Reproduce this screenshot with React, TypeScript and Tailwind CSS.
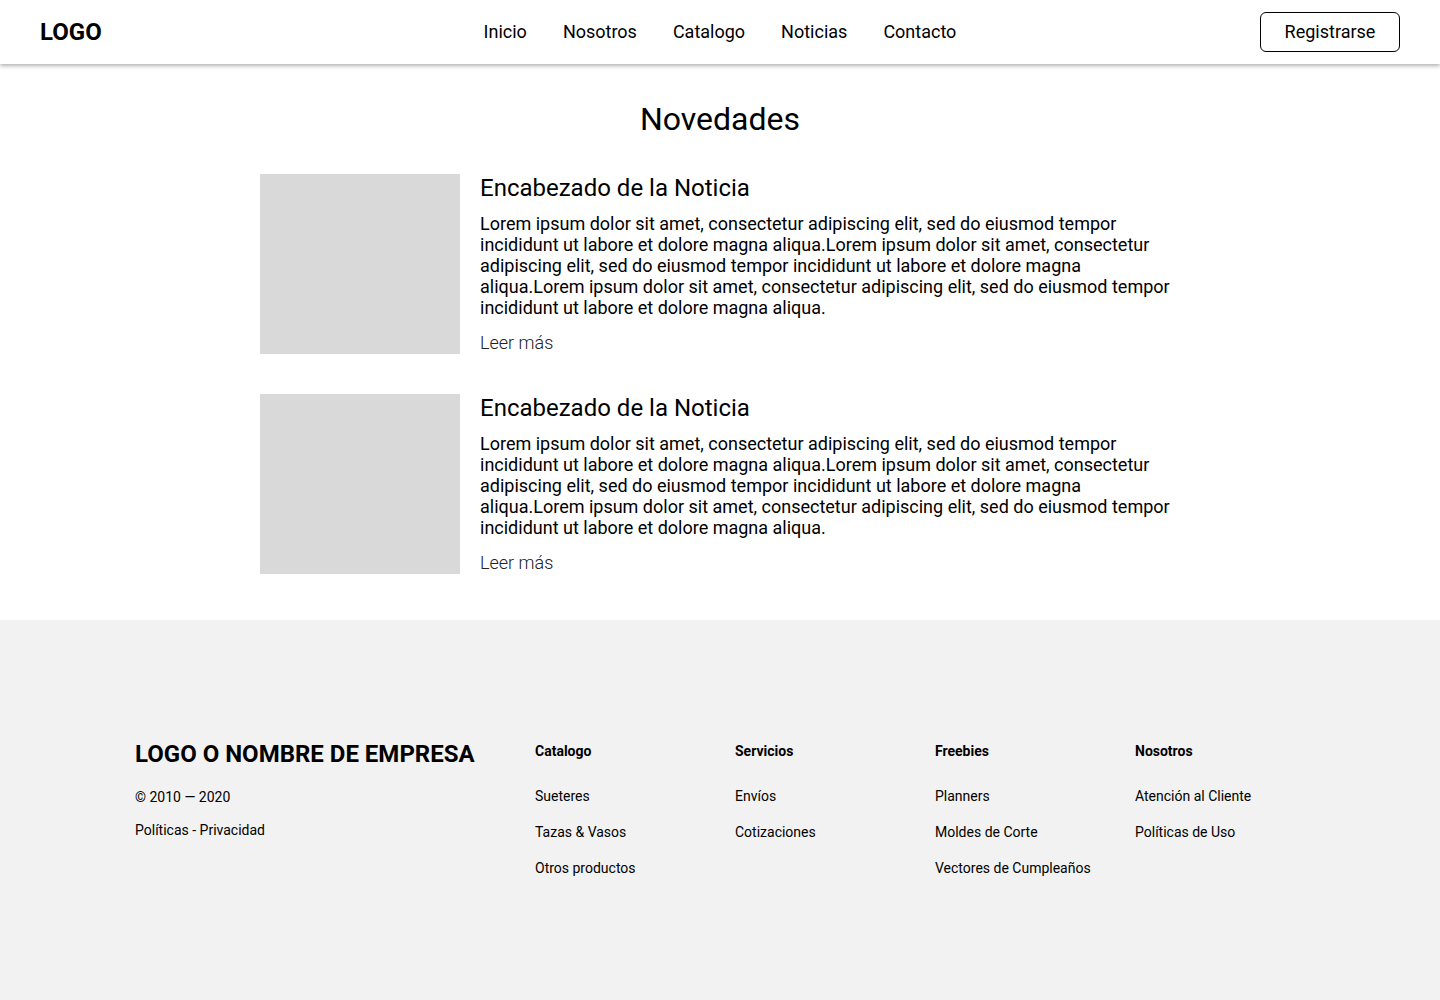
import React from 'react';

const navItems = ['Inicio', 'Nosotros', 'Catalogo', 'Noticias', 'Contacto'];

const lorem =
  'Lorem ipsum dolor sit amet, consectetur adipiscing elit, sed do eiusmod tempor incididunt ut labore et dolore magna aliqua.Lorem ipsum dolor sit amet, consectetur adipiscing elit, sed do eiusmod tempor incididunt ut labore et dolore magna aliqua.Lorem ipsum dolor sit amet, consectetur adipiscing elit, sed do eiusmod tempor incididunt ut labore et dolore magna aliqua.';

const footerColumns = [
  { title: 'Catalogo', links: ['Sueteres', 'Tazas & Vasos', 'Otros productos'] },
  { title: 'Servicios', links: ['Envíos', 'Cotizaciones'] },
  { title: 'Freebies', links: ['Planners', 'Moldes de Corte', 'Vectores de Cumpleaños'] },
  { title: 'Nosotros', links: ['Atención al Cliente', 'Políticas de Uso'] },
];

const NewsItem: React.FC = () => (
  <article className="flex gap-5">
    <div className="w-[200px] h-[180px] shrink-0 bg-[#d9d9d9]" />
    <div className="w-[700px]">
      <h2 className="text-[24px] leading-[28px] text-black">Encabezado de la Noticia</h2>
      <p className="mt-[11px] text-[18px] leading-[21px] text-black">{lorem}</p>
      <a href="#" className="block mt-[14px] text-[18px] leading-[21px] font-light text-[#222]">
        Leer más
      </a>
    </div>
  </article>
);

export default function App() {
  return (
    <div className="min-h-screen bg-white text-black font-['Roboto','Liberation_Sans',sans-serif]">
      {/* Header */}
      <header className="relative z-10 h-16 px-10 flex items-center justify-between bg-white shadow-[0_2px_4px_rgba(0,0,0,0.3)]">
        <div className="w-[140px] text-[24px] leading-[28px] font-bold">LOGO</div>
        <nav className="flex gap-9 text-[18px] leading-[21px] mb-[1px]">
          {navItems.map((item) => (
            <a key={item} href="#" className="text-black">
              {item}
            </a>
          ))}
        </nav>
        <button className="w-[140px] h-10 pb-[1px] border border-black rounded-md text-[18px] leading-[21px]">
          Registrarse
        </button>
      </header>

      {/* News */}
      <main className="pt-9 pb-[46px]">
        <h1 className="text-center text-[32px] leading-[38px]">Novedades</h1>
        <div className="mt-9 w-[920px] mx-auto flex flex-col gap-10">
          <NewsItem />
          <NewsItem />
        </div>
      </main>

      {/* Footer */}
      <footer className="bg-[#f2f2f2] h-[380px] pt-[120px] pl-[135px]">
        <div className="flex">
          <div className="w-[400px] shrink-0">
            <div className="text-[24px] leading-[28px] font-bold">LOGO O NOMBRE DE EMPRESA</div>
            <div className="mt-[21px] text-[14px] leading-[16px]">© 2010 — 2020</div>
            <div className="mt-[17px] text-[14px] leading-[16px]">Políticas - Privacidad</div>
          </div>
          {footerColumns.map((col) => (
            <div key={col.title} className="w-[200px] shrink-0 pt-[3px]">
              <div className="text-[14px] leading-[16px] font-bold">{col.title}</div>
              <ul className="mt-[29px] flex flex-col gap-5">
                {col.links.map((l) => (
                  <li key={l} className="text-[14px] leading-[16px]">
                    {l}
                  </li>
                ))}
              </ul>
            </div>
          ))}
        </div>
      </footer>
    </div>
  );
}
